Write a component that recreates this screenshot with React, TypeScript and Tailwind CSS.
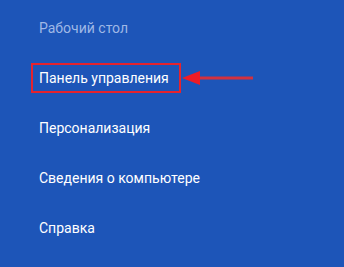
const ITEMS = [
  { label: "Рабочий стол", dim: true },
  { label: "Панель управления", marked: true },
  { label: "Персонализация" },
  { label: "Сведения о компьютере" },
  { label: "Справка" },
];

// ── Pointer arrow drawn next to the highlighted entry ─────────────────────────

function Arrow() {
  return (
    <svg width="74" height="18" viewBox="0 0 74 18" className="shrink-0">
      <line x1="16" y1="9" x2="72" y2="9" stroke="#d2313f" strokeWidth="3" />
      <polygon points="1,9 19,2 19,16" fill="#ee1c25" />
    </svg>
  );
}

export default function App() {
  return (
    <div
      className="w-[344px] h-[267px] bg-[#1d55b8] pt-[3px] pl-[31px] overflow-hidden"
      style={{ fontFamily: 'Roboto, "Noto Sans", sans-serif' }}
    >
      {ITEMS.map((it) => (
        <div key={it.label} className="h-[50px] flex items-center">
          {it.marked ? (
            <div className="flex items-center">
              <div className="border-2 border-[#e5232e] pl-[6px] pr-[10px] h-[30px] flex items-center text-[14px] text-white">
                {it.label}
              </div>
              <Arrow />
            </div>
          ) : (
            <span className={`pl-[8px] text-[14px] ${it.dim ? "text-[#9fb8e6]" : "text-white"}`}>
              {it.label}
            </span>
          )}
        </div>
      ))}
    </div>
  );
}
